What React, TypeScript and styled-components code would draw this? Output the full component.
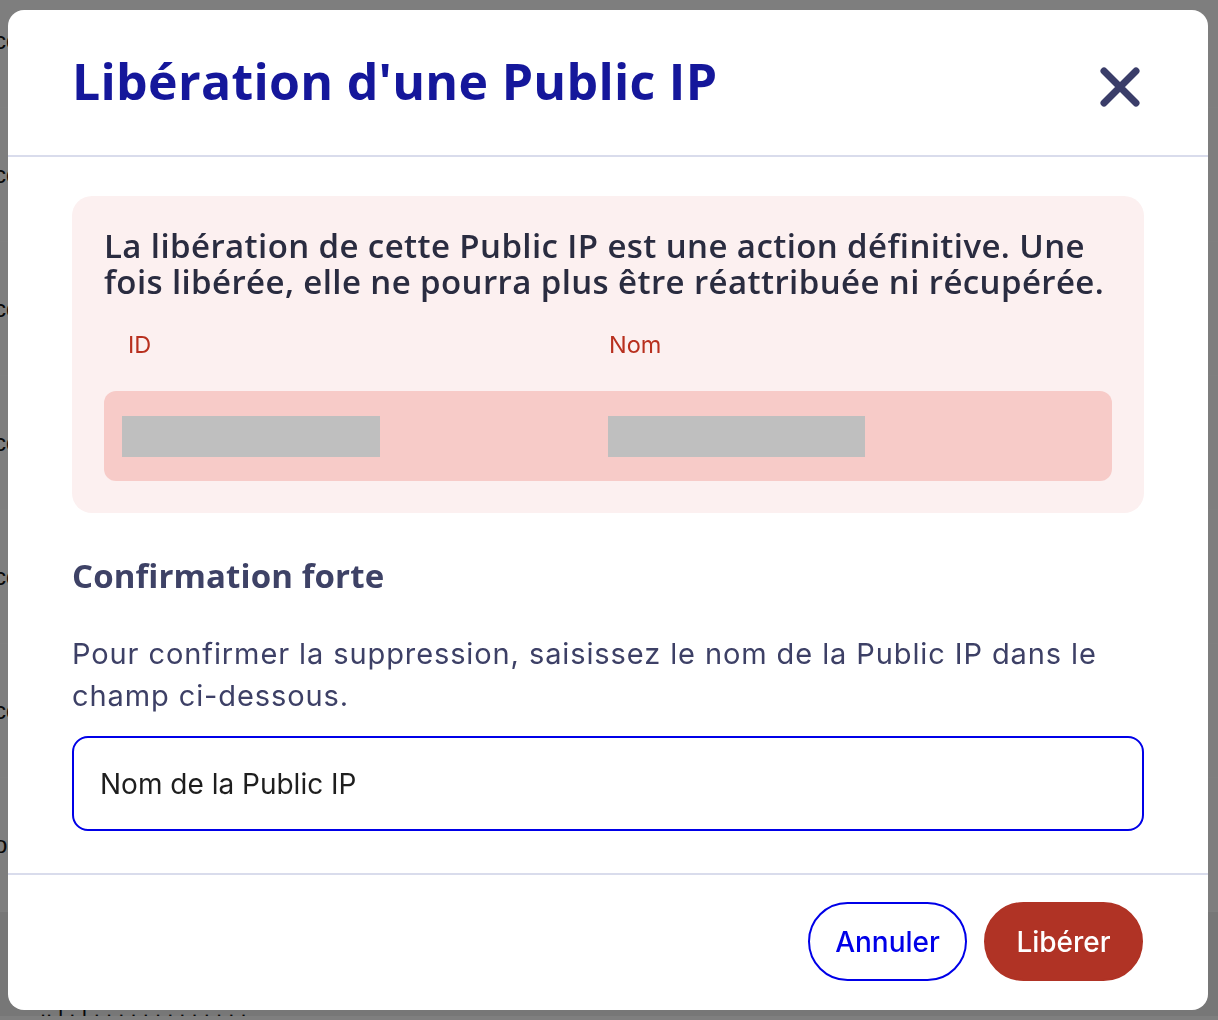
import React, { useEffect, useRef } from "react";
import styled, { createGlobalStyle } from "styled-components";

const GlobalStyle = createGlobalStyle`
  html, body { margin: 0; padding: 0; background: #ffffff; }
  body { font-family: "Inter", "Liberation Sans", sans-serif; overflow: hidden; }
  * { box-sizing: border-box; }
`;

/* ---------- page behind the dialog ---------- */
const Page = styled.div`
  margin-top: -26px;
  display: flex;
  flex-direction: column;
  font-family: "Liberation Sans", Arial, sans-serif;
`;

const PageRow = styled.div`
  height: 134px;
  display: flex;
  align-items: center;
  background: #fcfcfc;
  border-bottom: 1px solid #ffffff;
  font-size: 24px;
  color: #111;
`;

const PageRowText = styled.span`
  margin-left: -6px;
`;

const PageFooter = styled.div`
  background: #eeeeee;
  height: 104px;
  padding: 92px 0 0 40px;
  font-size: 22px;
  line-height: 12px;
  overflow: hidden;
  color: #111;
`;

/* ---------- overlay & dialog ---------- */
const Overlay = styled.div`
  position: fixed;
  inset: 0;
  background: rgba(0, 0, 0, 0.5);
  display: flex;
  align-items: flex-start;
  padding: 10px 10px 10px 8px;
`;

const Dialog = styled.div`
  width: 1200px;
  height: 1000px;
  background: #ffffff;
  border-radius: 16px;
  display: flex;
  flex-direction: column;
  overflow: hidden;
`;

const Header = styled.header`
  height: 147px;
  flex: none;
  display: flex;
  align-items: center;
  justify-content: space-between;
  padding: 0 64px 0 64px;
  border-bottom: 2px solid #d9dcec;
`;

const Title = styled.h1`
  margin: 0 0 4px 0;
  font-family: "Open Sans", "Liberation Sans", sans-serif;
  font-weight: 700;
  font-size: 50px;
  line-height: 60px;
  color: #15179b;
  letter-spacing: 0.3px;
`;

const CloseButton = styled.button`
  width: 48px;
  height: 48px;
  margin-top: 8px;
  padding: 0;
  border: none;
  background: transparent;
  display: flex;
  align-items: center;
  justify-content: center;
  cursor: pointer;
`;

const Body = styled.div`
  flex: 1;
  padding: 39px 64px 42px 64px;
  display: flex;
  flex-direction: column;
`;

const Warning = styled.section`
  background: #fcf0f0;
  border-radius: 20px;
  padding: 32px 32px 32px 32px;
`;

const WarningText = styled.p`
  margin: 0;
  font-family: "Open Sans", "Liberation Sans", sans-serif;
  font-weight: 600;
  font-size: 33px;
  line-height: 36px;
  letter-spacing: 0.4px;
  color: #2a2c40;
`;

const TableHead = styled.div`
  display: grid;
  grid-template-columns: 504px 1fr;
  margin-top: 27px;
  padding-bottom: 28px;
`;

const HeadCell = styled.div<{ $pad: number }>`
  padding-left: ${(p) => p.$pad}px;
  font-family: "Inter", "Liberation Sans", sans-serif;
  font-size: 23.5px;
  line-height: 36px;
  color: #b8301f;
`;

const TableRow = styled.div`
  display: grid;
  grid-template-columns: 504px 1fr;
  align-items: center;
  height: 90px;
  background: #f7cbc8;
  border-radius: 12px;
`;

const ValueCell = styled.div<{ $pad: number }>`
  padding-left: ${(p) => p.$pad}px;
  display: flex;
  align-items: center;
`;

const Redacted = styled.div<{ $w: number }>`
  width: ${(p) => p.$w}px;
  height: 41px;
  background: #bfbfbf;
`;

const SectionTitle = styled.h2`
  margin: 43px 0 0 0;
  font-family: "Open Sans", "Liberation Sans", sans-serif;
  font-weight: 700;
  font-size: 33px;
  line-height: 40px;
  letter-spacing: 0.1px;
  color: #3e4266;
`;

const Paragraph = styled.p`
  margin: 37px 0 0 0;
  font-family: "Inter", "Liberation Sans", sans-serif;
  font-size: 29px;
  line-height: 42px;
  letter-spacing: 0.9px;
  color: #3d4066;
`;

const TextInput = styled.input`
  margin-top: 19px;
  width: 100%;
  height: 95px;
  border: 2px solid #0000e8;
  border-radius: 16px;
  padding: 0 26px;
  font-family: "Inter", "Liberation Sans", sans-serif;
  font-size: 28px;
  color: #1e1e1e;
  caret-color: #111;
  background: #ffffff;
  outline: none;
`;

const Footer = styled.footer`
  height: 137px;
  flex: none;
  border-top: 2px solid #d9dcec;
  display: flex;
  align-items: center;
  justify-content: flex-end;
  gap: 17px;
  padding: 0 65px 2px 64px;
`;

const Button = styled.button<{ $variant: "secondary" | "danger" }>`
  width: 159px;
  height: 79px;
  border-radius: 40px;
  font-family: "Inter", "Liberation Sans", sans-serif;
  font-weight: 500;
  font-size: 28px;
  cursor: pointer;
  border: 2px solid ${(p) => (p.$variant === "danger" ? "#b03325" : "#0000e8")};
  background: ${(p) => (p.$variant === "danger" ? "#b03325" : "#ffffff")};
  color: ${(p) => (p.$variant === "danger" ? "#ffffff" : "#0000e8")};
`;

const CloseIcon = () => (
  <svg width="40" height="40" viewBox="0 0 40 40" fill="none">
    <path
      d="M4 4 L36 36 M36 4 L4 36"
      stroke="#3a3d69"
      strokeWidth="7"
      strokeLinecap="round"
    />
  </svg>
);

export default function App() {
  const inputRef = useRef<HTMLInputElement>(null);
  useEffect(() => {
    const el = inputRef.current;
    if (el) {
      el.focus();
      const n = el.value.length;
      el.setSelectionRange(n, n);
    }
  }, []);

  const rows = ["co", "co", "co", "co", "co", "co", "oa"];

  return (
    <>
      <GlobalStyle />
      <Page>
        {rows.map((t, i) => (
          <PageRow key={i}>
            <PageRowText>{t}</PageRowText>
          </PageRow>
        ))}
        <PageFooter>.. l . f . . . . . . . . . . . . .</PageFooter>
      </Page>
      <Overlay>
        <Dialog role="dialog" aria-modal="true">
          <Header>
            <Title>Libération d'une Public IP</Title>
            <CloseButton aria-label="Fermer">
              <CloseIcon />
            </CloseButton>
          </Header>
          <Body>
            <Warning>
              <WarningText>
                La libération de cette Public IP est une action définitive. Une
                fois libérée, elle ne pourra plus être réattribuée ni récupérée.
              </WarningText>
              <TableHead>
                <HeadCell $pad={24}>ID</HeadCell>
                <HeadCell $pad={1}>Nom</HeadCell>
              </TableHead>
              <TableRow>
                <ValueCell $pad={18}>
                  <Redacted $w={258} />
                </ValueCell>
                <ValueCell $pad={0}>
                  <Redacted $w={257} />
                </ValueCell>
              </TableRow>
            </Warning>
            <SectionTitle>Confirmation forte</SectionTitle>
            <Paragraph>
              Pour confirmer la suppression, saisissez le nom de la Public IP dans
              le champ ci-dessous.
            </Paragraph>
            <TextInput
              ref={inputRef}
              type="text"
              defaultValue="Nom de la Public IP"
            />
          </Body>
          <Footer>
            <Button $variant="secondary">Annuler</Button>
            <Button $variant="danger">Libérer</Button>
          </Footer>
        </Dialog>
      </Overlay>
    </>
  );
}
